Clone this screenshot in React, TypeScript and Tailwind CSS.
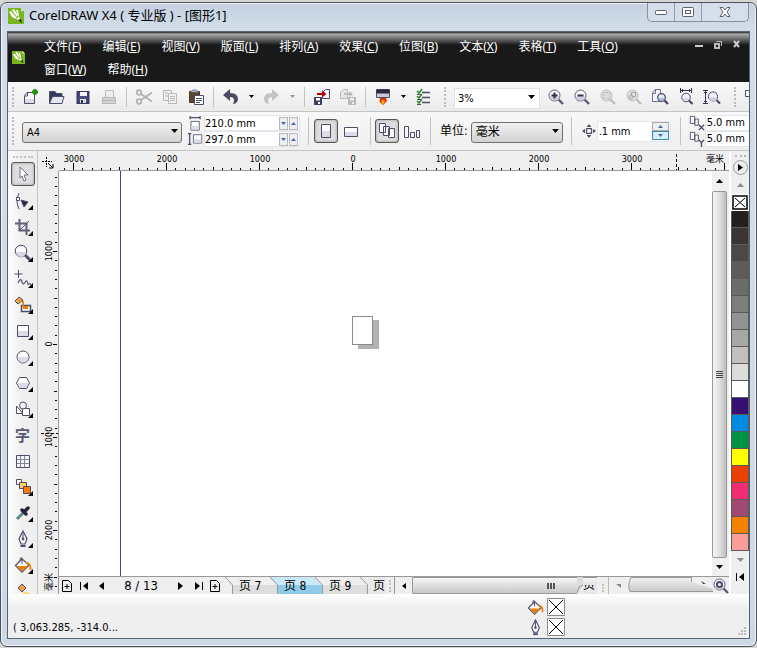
import type { ReactNode } from 'react';

const INK = '#4d4d68';
const uiFont = "font-['DejaVu_Sans_Condensed','DejaVu_Sans','Noto_Sans_CJK_SC',sans-serif]";
const sysFont = "font-['Noto_Sans','Noto_Sans_CJK_SC',sans-serif]";

const menus = [
  ['文件', 'F'], ['编辑', 'E'], ['视图', 'V'], ['版面', 'L'], ['排列', 'A'], ['效果', 'C'],
  ['位图', 'B'], ['文本', 'X'], ['表格', 'T'], ['工具', 'O'], ['窗口', 'W'], ['帮助', 'H'],
];

const swatches = [
  '#24201b', '#3a3533', '#4c4845', '#5f5b5b', '#6c6c6b', '#7e7e7d', '#929292', '#a7a7a6', '#c0bfbe', '#dcdcdb',
  '#ffffff', '#350f71', '#008ae2', '#009245', '#ffff00', '#ea4000', '#f02d72', '#a04a72', '#f28200', '#fb9d98',
];

function Icon({ children, size = 18 }: { children: ReactNode; size?: number }) {
  return (
    <svg width={size} height={size} viewBox="0 0 18 18" fill="none" stroke={INK} strokeWidth="1" className="shrink-0" aria-hidden="true">
      {children}
    </svg>
  );
}

function Logo({ size }: { size: number }) {
  return (
    <svg width={size} height={size} viewBox="0 0 16 16" className="shrink-0" aria-hidden="true">
      <path d="M0 0H13L16 3V16H0Z" fill="#79b51c" />
      <path d="M13 0V3H16Z" fill="#dfeecb" />
      <path d="M1 4L3 3L8 9V11L4 9Z" fill="#fff" />
      <path d="M4 2L6 1L9 6V9Z" fill="#fff" />
      <path d="M8 2L10 2L11 8L10 9Z" fill="#fff" />
      <path d="M8 10L11 9L13 13L10 12Z" fill="#fff" />
      <path d="M10 12L13 11L14 15Z" fill="#222" />
    </svg>
  );
}

function Mag({ children, gray = false }: { children?: ReactNode; gray?: boolean }) {
  const c = gray ? '#bdbdbd' : '#5b5b74';
  return (
    <Icon>
      <path d="M11.500 11.500L16 16" stroke={c} strokeWidth="2.400" />
      <circle cx="7.500" cy="7.500" r="5.500" fill={gray ? '#dedede' : '#f7f7fc'} stroke={c} />
      {!gray && <path d="M2.600 8.500H12.400A5 5 0 0 1 2.600 8.500" fill="#cfcfe0" stroke="none" />}
      {children}
    </Icon>
  );
}

function Bucket({ size = 18 }: { size?: number }) {
  return (
    <Icon size={size}>
      <path d="M8 3L15 9L8 16L1.500 9.500Z" fill="#fff" stroke="#55556c" strokeWidth="1.300" />
      <path d="M3 10H14L8 15.500Z" fill="#f08000" stroke="none" />
      <path d="M8 8V2.500Q8 1 6.500 2L6 5" />
      <path d="M12 7Q17 7 16.500 14" stroke="#f08000" strokeWidth="1.800" />
    </Icon>
  );
}

function Nib({ size = 18 }: { size?: number }) {
  return (
    <Icon size={size}>
      <path d="M9 1L5 9L7 14H11L13 9Z" fill="#fafaff" strokeWidth="1.200" />
      <path d="M9 3V9" />
      <circle cx="9" cy="9" r="1" fill={INK} />
      <path d="M6.500 16H11.500" strokeWidth="2" />
    </Icon>
  );
}

function Caret({ up = false, gray = false }: { up?: boolean; gray?: boolean }) {
  return (
    <svg width="7" height="4" viewBox="0 0 7 4" className="shrink-0" aria-hidden="true">
      <path d={up ? 'M0 4H7L3.500 0Z' : 'M0 0H7L3.500 4Z'} fill={gray ? '#8b8b8b' : '#000'} />
    </svg>
  );
}

function ToolButton({ label, children }: { label: string; children: ReactNode }) {
  return (
    <button aria-label={label} className="flex h-6 w-[26px] shrink-0 items-center justify-center">
      {children}
    </button>
  );
}

function MiniDrop({ label, gray, wide }: { label: string; gray?: boolean; wide?: boolean }) {
  return (
    <button aria-label={label} className={`flex h-6 shrink-0 items-center justify-center ${wide ? 'w-4' : 'w-[14px]'}`}>
      <svg width="5" height="3" aria-hidden="true"><path d="M0 0H5L2.500 3Z" fill={gray ? '#999' : '#000'} /></svg>
    </button>
  );
}

function Sep({ tall = false }: { tall?: boolean }) {
  return (
    <div className="flex w-[9px] shrink-0 justify-center">
      <div className={`w-px bg-[#c3c3c3] ${tall ? 'h-7' : 'h-5'}`} />
    </div>
  );
}

function Grip({ tall = false }: { tall?: boolean }) {
  return (
    <div className="flex w-[10px] shrink-0 justify-center">
      <div className={`w-0 border-l-2 border-dotted border-[#bdbdbd] ${tall ? 'h-7' : 'h-5'}`} />
    </div>
  );
}

function Pages({ mark }: { mark: string }) {
  return (
    <Icon size={16}>
      <path d="M1.500 1.500H6.500V9.500H1.500ZM6.500 4.500H10.500V11.500H6.500Z" fill="#f8f8ff" />
      {mark === 'x' ? <path d="M11 11L17 17M17 11L11 17" strokeWidth="1.500" /> : <path d="M11 10L14 13L17 10M14 13V18" strokeWidth="1.500" />}
    </Icon>
  );
}

function Pressed({ label, children }: { label: string; children: ReactNode }) {
  return (
    <button aria-label={label} className="flex size-6 shrink-0 items-center justify-center rounded-[3px] border border-[#555] bg-[#dedede] shadow-[inset_0_0_3px_#999]">
      {children}
    </button>
  );
}

function TitleBar() {
  return (
    <header className="flex h-7 shrink-0 items-start justify-between pl-px">
      <div className="flex h-[26px] items-center gap-[5px]">
        <Logo size={16} />
        <h1 className={`${sysFont} whitespace-nowrap text-[13px] text-black`}>CorelDRAW X4 ( 专业版 ) - [图形1]</h1>
      </div>
      <div className="mr-px flex h-[19px] divide-x divide-[#8e9bab] rounded-b-[5px] border border-t-0 border-[#8491a1] bg-[#d5dfeb]">
        <button aria-label="最小化" className="flex w-[27px] items-center justify-center">
          <svg width="12" height="5" aria-hidden="true"><rect x=".5" y=".5" width="11" height="4" rx="1" fill="#fff" stroke="#55606e" /></svg>
        </button>
        <button aria-label="最大化" className="flex w-[27px] items-center justify-center">
          <svg width="12" height="10" fill="#fff" stroke="#55606e" aria-hidden="true"><rect x=".5" y=".5" width="11" height="9" rx="1" /><rect x="3.500" y="3.500" width="5" height="3" /></svg>
        </button>
        <button aria-label="关闭" className="flex w-[46px] items-center justify-center">
          <svg width="12" height="10" aria-hidden="true"><path d="M1 .5H4L6 3L8 .5H11L8 5L11 9.500H8L6 7L4 9.500H1L4 5Z" fill="#fff" stroke="#55606e" /></svg>
        </button>
      </div>
    </header>
  );
}

function MenuBar() {
  return (
    <div className="flex h-[50px] shrink-0 bg-[linear-gradient(#222_0px,#aaa_2px,#777_6px,#191919_13px)] text-white">
      <div className="flex w-9 shrink-0 items-center pl-1"><Logo size={13} /></div>
      <nav className={`${sysFont} flex flex-1 flex-wrap content-start gap-x-[21px] pt-[3px] pr-4 text-[12px] leading-[23px]`}>
        {menus.map(([name, key]) => (
          <button key={key} className="whitespace-nowrap">{name}(<u>{key}</u>)</button>
        ))}
      </nav>
      <div className="flex h-6 w-[54px] shrink-0 items-center gap-[10px]">
        <button aria-label="最小化文档"><svg width="9" height="8" aria-hidden="true"><path d="M0 5H8V7H0Z" fill="#ccc" /></svg></button>
        <button aria-label="还原文档"><svg width="9" height="9" fill="none" stroke="#bbb" aria-hidden="true"><path d="M2.500 1.500H7.500V6" /><rect x="1" y="4" width="4" height="4" strokeWidth="2" /></svg></button>
        <button aria-label="关闭文档"><svg width="8" height="8" aria-hidden="true"><path d="M1 1L6 7M6 1L1 7" stroke="#ccc" strokeWidth="2" /></svg></button>
      </div>
    </div>
  );
}

function StandardBar() {
  return (
    <div className="flex h-[30px] shrink-0 items-center overflow-hidden border-b border-[#c4c4c4] bg-linear-to-b from-[#f9f9f9] to-[#ebebeb]">
      <Grip />
      <ToolButton label="新建"><Icon><path d="M2.500 7.500L5 4.500H12.500V15.500H2.500Z" fill="#fbfbff" /><path d="M3 11H12V15H3Z" fill="#dcdce8" stroke="none" /><path d="M5.500 5V8H3" /><path d="M13 1V7M10 4H16M11 2L15 6M15 2L11 6" stroke="#2a9410" strokeWidth="2" /></Icon></ToolButton>
      <ToolButton label="打开"><Icon><path d="M1.500 15V3.500H7L8.500 5.500H14V8" fill="#333a5a" /><path d="M1.500 15.500L4.500 8.500H16L14 15.500Z" fill="#e6e6f2" /></Icon></ToolButton>
      <ToolButton label="保存"><Icon><path d="M3.500 4H14.500V15H3.500Z" fill="#4d4d80" stroke="#3b3b66" strokeWidth="2" /><path d="M6 4H13V8H6Z" fill="#f2f2fa" stroke="none" /><path d="M6 11H12V15H6Z" fill="#dcdcf0" stroke="none" /><path d="M7 12H9V15H7Z" fill="#333" stroke="none" /></Icon></ToolButton>
      <ToolButton label="打印"><Icon><path d="M5.500 2.500H13.500V9.500H5.500Z" fill="#eee" stroke="#bbb" /><path d="M2.500 9.500H15.500V15.500H2.500Z" fill="#d4d4d4" stroke="#b5b5b5" /><path d="M3 12.500H15" stroke="#b5b5b5" /></Icon></ToolButton>
      <Sep />
      <ToolButton label="剪切"><Icon><g stroke="#b2b2b2" strokeWidth="1.800"><circle cx="4" cy="4.500" r="2.300" /><circle cx="4" cy="13.500" r="2.300" /><path d="M6 6L17 13.500M6 12L17 4.500" /></g></Icon></ToolButton>
      <ToolButton label="复制"><Icon><g stroke="#b9b9b9" fill="#efefef"><path d="M2.500 2.500H10.500V12.500H2.500Z" /><path d="M7.500 5.500H15.500V15.500H7.500Z" /><path d="M4 5H7M4 8H7M9 8.500H14M9 10.500H14M9 12.500H14" /></g></Icon></ToolButton>
      <ToolButton label="粘贴"><Icon><path d="M2.500 3.500H12.500V14.500H2.500Z" fill="#59452f" stroke="#4a3a2a" /><path d="M4 4L5.500 2H9.500L11 4Z" fill="#b8dbe0" stroke="#779" /><path d="M7.500 7.500H16.500V16.500H7.500Z" fill="#fff" /><path d="M9 10.500H15M9 12.500H15M9 14.500H13" /></Icon></ToolButton>
      <Sep />
      <ToolButton label="撤消"><Icon><path d="M1 7L8 1V5C14 5 16 8 16 11C16 14 13 16 11 16C13 12 12 9 8 9V13Z" fill="#4b4b66" stroke="none" /></Icon></ToolButton>
      <MiniDrop label="撤消列表" />
      <ToolButton label="重做"><Icon><path d="M17 7L10 1V5C4 5 2 8 2 11C2 14 5 16 7 16C5 12 6 9 10 9V13Z" fill="#c4c4c4" stroke="none" /></Icon></ToolButton>
      <MiniDrop label="重做列表" gray wide />
      <Sep />
      <ToolButton label="导入"><Icon><path d="M9.500 4.500L12.500 1.500H16.500V10.500H9.500Z" fill="#f6f6ff" /><path d="M1.500 9.500H8.500V16.500H1.500Z" fill="#3b3b66" stroke="#3b3b66" /><path d="M3 10H7V12.500H3ZM5 14H7V16H5Z" fill="#fff" stroke="none" /><path d="M4 6H11" stroke="#c00000" strokeWidth="2" /><path d="M9 2.500L13.500 6L9 9.500Z" fill="#c00000" stroke="none" /></Icon></ToolButton>
      <ToolButton label="导出"><Icon><g stroke="#b9b9b9"><path d="M1.500 4.500L4.500 1.500H8.500V10.500H1.500Z" fill="#e8e8e8" /><path d="M9.500 9.500H16.500V16.500H9.500Z" fill="#b9b9b9" /><path d="M11 10H15V12.500H11ZM13 14H15V16H13Z" fill="#eee" stroke="none" /><path d="M5 6H12" strokeWidth="2" /><path d="M10.500 3L14 6L10.500 9Z" fill="#b9b9b9" stroke="none" /></g></Icon></ToolButton>
      <Sep />
      <ToolButton label="应用程序启动器"><Icon><path d="M2.500 1.500H15.500V9.500H2.500Z" fill="#c9c9d8" /><path d="M3 2H15V5H3Z" fill="#292940" stroke="#292940" /><path d="M6 10H12L13 13L9 17L5.500 14Z" fill="#e62a10" stroke="none" /><path d="M7.500 12H10.500V14L9 17L7.500 15Z" fill="#ffb000" stroke="none" /></Icon></ToolButton>
      <MiniDrop label="启动器列表" />
      <ToolButton label="选项"><Icon><path d="M8 4.500H16M8 9.500H16M8 14.500H16" strokeWidth="1.300" /><path d="M3 6.500H7M3 11.500H7M3 16.500H7" /><path d="M3 3L5 5L8 1M3 8L5 10L8 6M3 13L5 15L8 11" stroke="#2a8a2a" strokeWidth="1.500" /></Icon></ToolButton>
      <div className="pr-1 pl-1"><Grip /></div>
      <div className="relative shrink-0">
        <select aria-label="缩放级别" className={`${uiFont} h-[21px] w-[86px] appearance-none border border-[#dfe3ea] bg-white px-[3px] text-[11px] text-black`} defaultValue="3%"><option>3%</option></select>
        <span className="pointer-events-none absolute inset-y-0 right-[5px] flex items-center"><Caret /></span>
      </div>
      <div className="flex pl-[3px]">
        <ToolButton label="放大"><Mag><path d="M4.500 7.500H10.500M7.500 4.500V10.500" stroke="#33334e" strokeWidth="2" /></Mag></ToolButton>
        <ToolButton label="缩小"><Mag><path d="M4.500 7.500H10.500" stroke="#33334e" strokeWidth="2" /></Mag></ToolButton>
        <ToolButton label="缩放选定"><Mag gray><path d="M4.500 4.500H10.500V10.500H4.500Z" stroke="#999" strokeDasharray="1 2" /></Mag></ToolButton>
        <ToolButton label="缩放全部对象"><Mag gray><path d="M6.500 4.500H10.500V8.500H6.500Z" stroke="#aaa" /><circle cx="6" cy="9" r="2" stroke="#aaa" /></Mag></ToolButton>
        <ToolButton label="缩放页面"><Icon><path d="M1.500 5L4 1.500H9.500V13.500H1.500Z" fill="#f5f5fd" stroke="#70708a" /><path d="M4.500 2V5.500H2" stroke="#70708a" /><path d="M13 12L17 16" strokeWidth="2.400" /><circle cx="10.500" cy="9.500" r="3.800" fill="#dfe9f2" strokeWidth="1.300" /><path d="M7.500 10H13.500A3 3 0 0 1 7.500 10" fill="#acbad2" stroke="none" /></Icon></ToolButton>
        <ToolButton label="缩放页宽"><Icon><path d="M3 2.500H15M3.500 0V5M14.500 0V5M5.500 1V4M12.500 1V4" stroke="#33334e" /><circle cx="9" cy="9.500" r="4.300" fill="#eef" /><path d="M12 12.500L15.500 16" strokeWidth="2.200" /><path d="M5.500 10.500H12.500A4 4 0 0 1 5.500 10.500" fill="#ccd" stroke="none" /></Icon></ToolButton>
        <ToolButton label="缩放页高"><Icon><path d="M2.500 2V15M0 2.500H5M0 15.500H5M1 4.500H4M1 13.500H4" stroke="#33334e" /><circle cx="10" cy="8.500" r="4.600" fill="#eef" /><path d="M13.500 12L17 15.500" strokeWidth="2.200" /><path d="M6 9.500H14A4 4 0 0 1 6 9.500" fill="#ccd" stroke="none" /></Icon></ToolButton>
      </div>
      <div className="pl-[5px]"><Grip /></div>
      <button aria-label="更多工具" className="shrink-0"><Icon><path d="M5.500 2.500H15V8.500H5.500Z" fill="#fff" /></Icon></button>
    </div>
  );
}

function Dimension({ label, value }: { label: string; value: string }) {
  return (
    <div className="flex h-4 w-24 items-center border border-[#e2e6ed] bg-white pr-px">
      <input aria-label={label} defaultValue={value} className="h-full w-[74px] min-w-0 bg-transparent text-[11px] text-black" />
      <button aria-label={`${label}减少`} className="mr-px flex h-[13px] w-[9px] items-center justify-center border border-[#b7b7be] bg-[#eee]"><svg width="5" height="3" aria-hidden="true"><path d="M0 0H5L2.500 3Z" fill="#4b68b5" /></svg></button>
      <button aria-label={`${label}增加`} className="flex h-[13px] w-[9px] items-center justify-center border border-[#b7b7be] bg-[#eee]"><svg width="5" height="3" aria-hidden="true"><path d="M0 3H5L2.500 0Z" fill="#4b68b5" /></svg></button>
    </div>
  );
}

function PropertyBar() {
  const selectStyle = 'h-[21px] appearance-none rounded-[3px] border border-[#707070] bg-linear-to-b from-[#f1f1f1] to-[#d2d2d2] px-1 text-black';
  return (
    <div className={`${uiFont} flex h-[39px] shrink-0 items-center overflow-hidden border-b border-[#c4c4c4] bg-linear-to-b from-[#f8f8f8] to-[#efefef]`}>
      <Grip tall />
      <div className="relative mr-[6px] ml-1 shrink-0">
        <select aria-label="纸张类型" className={`${selectStyle} w-40 text-[11px]`} defaultValue="A4"><option>A4</option></select>
        <span className="pointer-events-none absolute inset-y-0 right-[4px] flex items-center"><Caret /></span>
      </div>
      <div className="mr-px flex shrink-0 flex-col">
        <Icon size={15}><path d="M3.500 6.500H13.500V17H3.500Z" fill="#fff" /><path d="M4 12H13V16H4Z" fill="#dcdce8" stroke="none" /><path d="M2.500 0V4M14.500 0V4M2.500 2H14.500" strokeWidth="1.500" /></Icon>
        <Icon size={15}><path d="M6.500 4.500H16.500V14.500H6.500Z" fill="#fff" /><path d="M7 10H16V14H7Z" fill="#dcdce8" stroke="none" /><path d="M0 3H4M0 16H4M2 3V16" strokeWidth="1.500" /></Icon>
      </div>
      <div className="mr-1 flex shrink-0 flex-col"><Dimension label="纸张宽度" value="210.0 mm" /><Dimension label="纸张高度" value="297.0 mm" /></div>
      <Sep tall />
      <div className="mr-[2px] flex shrink-0 items-center pl-px">
        <Pressed label="纵向"><Icon><path d="M4.500 2.500H13.500V15.500H4.500Z" fill="#fdfdff" /><path d="M5 9H13V15H5Z" fill="#dcdce8" stroke="none" /></Icon></Pressed>
        <ToolButton label="横向"><Icon><path d="M2.500 5.500H15.500V14.500H2.500Z" fill="#fff" /><path d="M3 10H15V14H3Z" fill="#dcdce8" stroke="none" /></Icon></ToolButton>
      </div>
      <Sep tall />
      <div className="mr-px flex shrink-0 items-center">
        <Pressed label="所有页面"><Icon><path d="M1.500 1.500H7.500V10.500H1.500ZM5.500 4.500H11.500V13.500H5.500ZM10.500 6.500H16.500V15.500H10.500Z" fill="#fafaff" /></Icon></Pressed>
        <ToolButton label="当前页面"><Icon><path d="M1.500 4.500H5.500V15.500H1.500ZM7.500 10.500H11.500V15.500H7.500ZM13.500 8.500H16.500V15.500H13.500Z" fill="#f3f3fc" /></Icon></ToolButton>
      </div>
      <Sep tall />
      <label htmlFor="units" className="mr-[3px] ml-[5px] shrink-0 text-[12px] whitespace-nowrap text-black">单位:</label>
      <div className="relative mr-1 shrink-0">
        <select id="units" className={`${selectStyle} w-[92px] text-[12px]`} defaultValue="毫米"><option>毫米</option></select>
        <span className="pointer-events-none absolute inset-y-0 right-[4px] flex items-center"><Caret /></span>
      </div>
      <Sep tall />
      <div className="mr-px flex shrink-0 pl-[6px]"><Icon size={14}><path d="M6 6H12V12H6Z" fill="#fff" strokeWidth="1.500" /><path d="M9 0L12 4H6ZM9 18L12 14H6ZM0 9L4 6V12ZM18 9L14 6V12Z" fill={INK} stroke="none" /></Icon></div>
      <div className="mr-[5px] flex h-[21px] w-[74px] shrink-0 items-center border border-[#e2e6ed] bg-white pr-px">
        <input aria-label="微调偏移" defaultValue=".1 mm" className="h-full w-[54px] min-w-0 pl-px text-[11px] text-black" />
        <div className="flex flex-col">
          <button aria-label="增加微调" className="flex h-[9px] w-[17px] items-center justify-center border border-[#aaa] bg-[#eee]"><svg width="5" height="3" aria-hidden="true"><path d="M0 3H5L2.500 0Z" fill="#4b68b5" /></svg></button>
          <button aria-label="减少微调" className="flex h-[9px] w-[17px] items-center justify-center border border-[#3c88b8] bg-[#d7eefb]"><svg width="5" height="3" aria-hidden="true"><path d="M0 0H5L2.500 3Z" fill="#4b68b5" /></svg></button>
        </div>
      </div>
      <Sep tall />
      <div className="flex shrink-0 flex-col pl-1"><Pages mark="x" /><Pages mark="y" /></div>
      <div className="flex min-w-0 flex-1 flex-col">
        <input aria-label="再制水平距离" defaultValue="5.0 mm" className="h-4 w-full border border-r-0 border-[#e2e6ed] bg-white pl-px text-[11px] text-black" />
        <input aria-label="再制垂直距离" defaultValue="5.0 mm" className="h-4 w-full border border-r-0 border-[#e2e6ed] bg-white pl-px text-[11px] text-black" />
      </div>
    </div>
  );
}

const tools: { label: string; flyout: boolean; art: ReactNode }[] = [
  { label: '形状工具', flyout: true, art: <Icon><path d="M5 1Q1 9 5 17" /><path d="M2.500 5.500H5.500V8.500H2.500Z" fill="#fff" /><path d="M7 8L14 10L10 15Z" fill="#29293e" /></Icon> },
  { label: '裁剪工具', flyout: true, art: <Icon><path d="M5.500 1V12.500H16M1 5.500H12.500V17" strokeWidth="2" stroke="#60607a" /><path d="M6 12L15 3" /></Icon> },
  { label: '缩放工具', flyout: true, art: <Icon><path d="M11 11L16 16" strokeWidth="3" /><circle cx="7" cy="7" r="5.800" fill="#fafaff" /><path d="M2 8H12A5 5 0 0 1 2 8" fill="#d6d6e4" stroke="none" /></Icon> },
  { label: '手绘工具', flyout: true, art: <Icon><path d="M4.500 0V8M.5 4H8.500" /><path d="M4 13Q7 7 8 12Q9 16 12 11Q13 10 14 14L17 14" stroke="#606078" strokeWidth="1.300" /></Icon> },
  { label: '智能填充', flyout: true, art: <Icon><path d="M5 1L9 4L4 8L1 5Z" fill="#f5a040" /><path d="M7.500 9.500H16.500V15.500H7.500Z" fill="#fff" strokeWidth="1.500" /><path d="M8 5H10V10H14V13H9Z" fill="#f08000" stroke="none" /></Icon> },
  { label: '矩形工具', flyout: true, art: <Icon><path d="M3.500 3.500H14.500V14.500H3.500Z" fill="#fff" /><path d="M4 9H14V14H4Z" fill="#dcdce8" stroke="none" /></Icon> },
  { label: '椭圆形工具', flyout: true, art: <Icon><circle cx="9" cy="9" r="6" fill="#fff" /><path d="M3.500 9H14.500A5.500 5.500 0 0 1 3.500 9" fill="#dcdce8" stroke="none" /></Icon> },
  { label: '多边形工具', flyout: true, art: <Icon><path d="M2.500 9L5.500 3.500H12.500L15.500 9L12.500 14.500H5.500Z" fill="#fff" /><path d="M3 9H15L12 14H6Z" fill="#dcdce8" stroke="none" /></Icon> },
  { label: '基本形状', flyout: true, art: <Icon><path d="M2.500 6V13.500H9L2.500 6Z" fill="#fff" /><path d="M8.500 8.500H15.500V15.500H8.500Z" fill="#fff" /><circle cx="9" cy="5.500" r="3.500" fill="#f0f0f8" /></Icon> },
  { label: '文本工具', flyout: false, art: <span className="font-['Noto_Sans_CJK_SC',sans-serif] text-[15px] leading-4 font-bold text-[#5a5a74]">字</span> },
  { label: '表格工具', flyout: false, art: <Icon><path d="M2.500 3.500H15.500V15.500H2.500Z" fill="#f4f4fb" /><path d="M3 7.500H15M3 11.500H15M6.500 4V15M10.500 4V15" stroke="#85859c" /></Icon> },
  { label: '调和工具', flyout: true, art: <Icon><path d="M2.500 1.500H7.500V6.500H2.500Z" fill="#fff" /><path d="M5.500 4.500H12.500V10.500H5.500Z" fill="#ffd060" /><path d="M9.500 8.500H16.500V15.500H9.500Z" fill="#ff7800" /></Icon> },
  { label: '滴管工具', flyout: true, art: <Icon><path d="M3 15L10 8" stroke="#5f8a8a" strokeWidth="3" /><path d="M8 6L12 10M10 8L14 4" stroke="#24243a" strokeWidth="3.500" strokeLinecap="round" /></Icon> },
  { label: '轮廓工具', flyout: true, art: <Nib /> },
  { label: '填充工具', flyout: true, art: <Bucket /> },
  { label: '交互式填充', flyout: false, art: <Icon><path d="M8 2L12 6L8 10L4 6Z" fill="#f5a040" /><path d="M9 10H15V18H9Z" fill="#ffd878" stroke="none" /></Icon> },
];

function Toolbox() {
  return (
    <aside className="flex w-[30px] shrink-0 flex-col items-center overflow-hidden border-r border-[#c4c4c4] bg-linear-to-r from-[#fdfdfd] to-[#efefef] to-50%">
      <div className="flex h-[11px] shrink-0 items-center"><div className="w-5 border-t-2 border-dotted border-[#c4c4c4]" /></div>
      <div className="pb-[2px]">
        <Pressed label="挑选工具"><Icon><path d="M6 2L14 10H10L12 15L10 16L8 11L6 13Z" fill="#fff" stroke="#70708a" /></Icon></Pressed>
      </div>
      {tools.map((t) => (
        <button key={t.label} aria-label={t.label} className="relative flex h-[26px] w-7 shrink-0 items-center justify-center">
          {t.art}
          {t.flyout && <svg width="5" height="5" className="absolute right-1 bottom-1" aria-hidden="true"><path d="M5 0V5H0Z" fill="#000" /></svg>}
        </button>
      ))}
    </aside>
  );
}

const steps = Array.from({ length: 80 }, (_, i) => i - 40);
const tickAt = (zero: number, n: number) => Math.round(zero + n * 9.3);

function HorizontalRuler() {
  return (
    <svg className="h-5 w-full shrink-0 border-b border-[#999]" aria-label="水平标尺">
      {steps.map((n) => (
        <rect key={n} x={tickAt(293, n)} y={n % 10 === 0 ? 12 : n % 5 === 0 ? 16 : 17} width="1" height={n % 10 === 0 ? 7 : n % 5 === 0 ? 3 : 2} fill={n > 39 ? 'none' : '#000'} />
      ))}
      {[-30, -20, -10, 0, 10, 20, 30].map((n) => (
        <text key={n} x={tickAt(293, n) + 1} y="11" textAnchor="middle" className={`${uiFont} text-[9px]`}>{Math.abs(n) * 100}</text>
      ))}
      <path d="M617.500 3V19" stroke="#000" strokeDasharray="3 2" />
      <text x="647" y="11" className={`${uiFont} text-[9px]`}>毫米</text>
      <path d="M665.500 12V19" stroke="#000" />
    </svg>
  );
}

function VerticalRuler() {
  return (
    <div className="flex w-[21px] shrink-0 flex-col">
      <button aria-label="标尺原点" className="flex h-5 items-end justify-center">
        <svg width="14" height="14" stroke="#000" fill="none" aria-hidden="true"><path d="M4.500 0V10M0 4.500H10" strokeDasharray="2 1" /><path d="M6 6L11 11M11 7V11H7" /></svg>
      </button>
      <svg className="min-h-0 w-full flex-1 border-r border-[#999]" aria-label="垂直标尺">
        {steps.map((n) => (
          <rect key={n} x={n % 10 === 0 ? 15 : n % 5 === 0 ? 16 : 17} y={tickAt(173, n)} width={n % 10 === 0 ? 4 : n % 5 === 0 ? 3 : 2} height="1" fill="#000" />
        ))}
        {[-10, 0, 10, 20].map((n) => (
          <text key={n} textAnchor="middle" transform={`translate(14 ${tickAt(173, n)}) rotate(-90)`} className={`${uiFont} text-[9px]`}>{Math.abs(n) * 100}</text>
        ))}
        <path d="M3 262.500H20" stroke="#000" strokeDasharray="3 2" />
        <text transform="translate(14 420) rotate(-90)" className={`${uiFont} text-[9px]`}>毫米</text>
      </svg>
    </div>
  );
}

function VerticalScroll() {
  return (
    <div className="mr-[2px] flex w-[15px] shrink-0 flex-col bg-[#f0f0f0]">
      <button aria-label="向上滚动" className="flex h-5 items-center justify-center"><Caret up /></button>
      <div className="flex flex-1 flex-col items-center justify-center gap-px rounded-[2px] border border-[#999] bg-linear-to-r from-[#f6f6f6] via-[#e0e0e0] to-[#bdbdbd]">
        {[0, 1, 2, 3].map((i) => <div key={i} className="h-px w-[7px] bg-[#444]" />)}
      </div>
      <button aria-label="向下滚动" className="flex h-[18px] items-center justify-center"><Caret /></button>
    </div>
  );
}

function Arrow({ d, label, wide = false }: { d: string; label: string; wide?: boolean }) {
  return (
    <button aria-label={label} className={`flex shrink-0 items-center justify-center ${wide ? 'w-[18px]' : 'w-[17px]'}`}>
      <svg width="10" height="10" fill="#000" stroke="none" aria-hidden="true"><path d={d} /></svg>
    </button>
  );
}
const prevPath = 'M8 1V9L3 5Z';
const nextPath = 'M2 1V9L7 5Z';
const firstPath = 'M1 1H2V9H1ZM9 1V9L4 5Z';
const lastPath = 'M1 1V9L6 5ZM8 1H9V9H8Z';
const smallPrevPath = 'M7 2V8L3 5Z';
const addPage = (
  <svg width="10" height="12" fill="none" stroke="#000" aria-hidden="true"><path d="M.5 .5H6.500L9.500 3.500V11.500H.5ZM5 4V9M2.500 6.500H7.500" /></svg>
);

function Tab({ name, active = false, corner = '#efefef' }: { name: string; active?: boolean; corner?: string }) {
  return (
    <button className={`flex h-full w-[45px] shrink-0 items-center pl-[6px] text-[12px] leading-[14px] whitespace-nowrap text-black ${active ? 'bg-linear-to-b from-[#c9e9f8] from-45% to-[#90cbe9] to-50%' : 'bg-linear-to-b from-[#efefef] from-45% to-[#dedede] to-50%'}`}>
      <span className="flex-1 text-left">{name}</span>
      <svg width="9" height="17" className="shrink-0" aria-hidden="true"><path d="M0 0H9V9Z" fill={corner} /><path d="M1 0L8.500 8V17" fill="none" stroke="#999" /></svg>
    </button>
  );
}

function PageBar() {
  return (
    <div className={`${uiFont} flex h-[18px] shrink-0 overflow-hidden border-t border-[#999] bg-[#efefef]`}>
      <button aria-label="在前面添加页" className="flex w-4 shrink-0 items-center justify-center">{addPage}</button>
      <Arrow label="第一页" d={firstPath} />
      <Arrow label="上一页" d={prevPath} wide />
      <span className="w-[62px] shrink-0 text-center text-[13px] leading-[17px] text-black">8 / 13</span>
      <Arrow label="下一页" d={nextPath} wide />
      <Arrow label="最后一页" d={lastPath} />
      <button aria-label="在后面添加页" className="flex w-4 shrink-0 items-center justify-center">{addPage}</button>
      <svg width="10" height="18" fill="none" stroke="#999" className="shrink-0" aria-hidden="true"><path d="M2 0L9.500 8V18" /></svg>
      <Tab name="页 7" corner="#c9e9f8" /><Tab name="页 8" active /><Tab name="页 9" />
      <button className="w-[18px] shrink-0 overflow-hidden bg-[#e8e8e8] pl-[5px] text-left text-[12px] leading-[16px] whitespace-nowrap text-black">页</button>
      <div className="flex w-[9px] shrink-0 items-center justify-center border-r border-[#999]"><div className="h-3 border-l-2 border-dotted border-[#bbb]" /></div>
      <Arrow label="向左滚动" d={smallPrevPath} />
      <div className="flex min-w-0 flex-1">
        <div className="flex flex-1 items-center justify-end gap-px rounded-l-[2px] border border-r-0 border-[#999] bg-linear-to-b from-[#f6f6f6] to-[#c8c8c8] pr-[22px]">
          {[0, 1, 2].map((i) => <div key={i} className="h-[6px] w-[2px] bg-[#555]" />)}
        </div>
        <svg width="6" height="17" className="shrink-0" aria-hidden="true"><path d="M0 0H6V8L2 16H0Z" fill="#dcdcdc" /><path d="M6 8L2 10L0 16" fill="none" stroke="#999" /></svg>
      </div>
      <div className="relative w-[14px] shrink-0 bg-[#e7e7e7] text-[12px] leading-[16px] text-black">
        页
        <span className="absolute inset-x-0 top-0 h-2 border-t border-[#999] bg-linear-to-b from-[#f6f6f6] to-[#e2e2e2]" />
      </div>
      <div className="flex w-3 shrink-0 items-center justify-center border-r border-[#bbb] pt-1"><div className="h-2 border-l-2 border-dotted border-[#c4c4c4]" /></div>
      <div className="flex w-[18px] shrink-0 items-center justify-center"><svg width="5" height="5" aria-hidden="true"><path d="M0 1H5V5Z" fill="#888" /></svg></div>
      <svg width="86" height="17" className="shrink-0" aria-hidden="true">
        <defs><linearGradient id="thumb" x2="0" y2="1"><stop stopColor="#f4f4f4" /><stop offset="1" stopColor="#c8c8c8" /></linearGradient></defs>
        <path d="M4 .5H65V5L86 12V14.500H3Q0 9 4 .5Z" fill="url(#thumb)" />
        <path d="M4 .5H64.500V5M4 .5Q0 9 3 14.500H86" fill="none" stroke="#999" />
        <path d="M74 4L79 7H76Z" fill="#444" />
      </svg>
      <button aria-label="导航器" className="flex w-4 shrink-0 items-center justify-center"><Mag><circle cx="7.500" cy="7.500" r="2.500" strokeWidth="2" /></Mag></button>
    </div>
  );
}

function Palette() {
  return (
    <aside className="flex w-[20px] shrink-0 flex-col items-center overflow-hidden border-l-2 border-white bg-[#efefef]">
      <div className="flex h-[9px] shrink-0 items-center"><div className="w-[11px] border-t-2 border-dotted border-[#bbb]" /></div>
      <button aria-label="调色板菜单" className="flex size-[15px] shrink-0 items-center justify-center rounded-full border border-[#999] bg-[#eee]"><svg width="5" height="7" aria-hidden="true"><path d="M0 0V7L5 3.500Z" /></svg></button>
      <button aria-label="向上滚动调色板" className="flex h-[19px] w-full shrink-0 items-center justify-center"><Caret up gray /></button>
      <button aria-label="无填充" className="h-[17px] w-[18px] shrink-0 border border-white bg-white"><svg width="16" height="15" viewBox="0 0 16 15" fill="none" stroke="#000" aria-hidden="true"><path d="M1 1H15V14H1Z" strokeWidth="1.500" /><path d="M3 3L13 12M13 3L3 12" /></svg></button>
      {swatches.map((c) => (
        <button key={c} aria-label={`颜色 ${c}`} className="h-[17px] w-[18px] shrink-0 border border-t-0 border-[#5a5a5a]" style={{ backgroundColor: c }} />
      ))}
      <button aria-label="向下滚动调色板" className="flex h-[17px] w-full shrink-0 items-center justify-center"><Caret gray /></button>
      <button aria-label="展开调色板" className="flex h-[17px] w-full shrink-0 items-center justify-center"><svg width="10" height="10" aria-hidden="true"><path d={firstPath} /></svg></button>
    </aside>
  );
}

function CrossBox() {
  return (
    <svg width="18" height="18" aria-hidden="true"><path d="M.5 .5H17.500V17.500H.5Z" fill="#fff" stroke="#888" /><path d="M2 2L16 16M16 2L2 16" stroke="#000" /></svg>
  );
}

function StatusBar() {
  return (
    <footer className="flex h-11 shrink-0 bg-linear-to-b from-white to-[#efefef] to-30%">
      <p className={`${uiFont} flex w-[70%] items-end pb-[2px] pl-[5px] text-[11px] text-black`}>( 3,063.285, -314.0...</p>
      <div className="flex flex-col gap-[2px] pt-1">
        <div className="flex items-center gap-[3px]"><Bucket size={17} /><CrossBox /></div>
        <div className="flex items-center gap-[3px]"><Nib size={17} /><CrossBox /></div>
      </div>
      <div className="flex flex-1 items-end justify-end p-[2px]">
        <svg width="9" height="9" fill="#bbb" aria-hidden="true"><path d="M6 0H8V2H6ZM3 3H5V5H3ZM6 3H8V5H6ZM0 6H2V8H0ZM3 6H5V8H3ZM6 6H8V8H6Z" /></svg>
      </div>
    </footer>
  );
}

export default function App() {
  return (
    <div className="h-screen overflow-hidden bg-[#d6d6d4] pt-[2px] pb-px">
      <div className="flex h-full flex-col rounded-[7px] border border-[#4b525c] bg-[linear-gradient(#c5d1e0,#d3deea_28px,#cdd9e6)] px-[6px] pb-[7px] shadow-[inset_0_0_0_1px_#edf3f9]">
        <TitleBar />
        <div className="flex min-h-0 flex-1 flex-col border border-[#59616b] bg-[#efefef]">
          <MenuBar />
          <StandardBar />
          <PropertyBar />
          <div className="flex min-h-0 flex-1">
            <Toolbox />
            <VerticalRuler />
            <main className="flex min-w-0 flex-1 flex-col">
              <HorizontalRuler />
              <div className="flex min-h-0 flex-1">
                <div className="relative min-w-0 flex-1 overflow-hidden bg-white">
                  <div className="absolute inset-y-0 left-[61px] w-px bg-[#46418c]" />
                  <div className="absolute top-[149px] left-[299px] h-[29px] w-[21px] bg-[#b2b2b2]" />
                  <div className="absolute top-[145px] left-[293px] h-[29px] w-[21px] border border-[#8a8a8a] bg-white" />
                </div>
                <VerticalScroll />
              </div>
              <PageBar />
            </main>
            <Palette />
          </div>
          <StatusBar />
        </div>
      </div>
    </div>
  );
}
